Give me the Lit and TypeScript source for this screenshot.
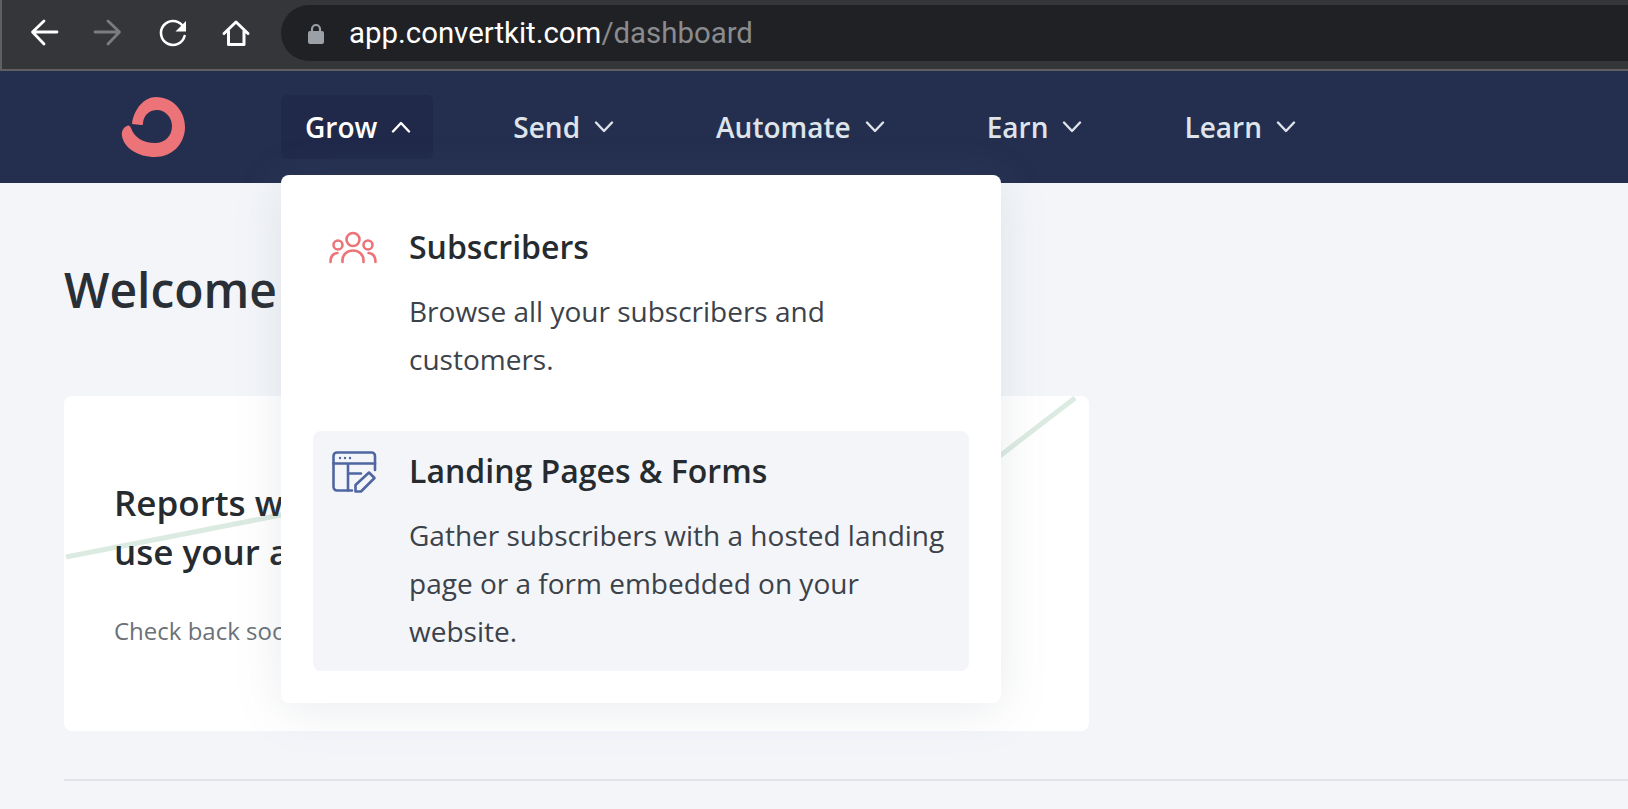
import { LitElement, html, css } from "lit";
import { customElement } from "lit/decorators.js";

const chevron = (up: boolean) => html`<svg class="chev" viewBox="0 0 20 12" width="20" height="12" fill="none" stroke="currentColor" stroke-width="2.4" stroke-linecap="round" stroke-linejoin="round"><path d=${up ? "M2 10.5 10 2l8 8.5" : "M2 1.5 10 10l8-8.5"}></path></svg>`;

const navItems = ["Send", "Automate", "Earn", "Learn"];

@customElement("app-root")
export class AppRoot extends LitElement {
  static styles = css`
    :host {
      display: block;
      height: 100vh;
      overflow: hidden;
      background: #f3f5f9;
      font-family: "Open Sans", "Liberation Sans", sans-serif;
    }
    .toolbar {
      height: 69px;
      box-sizing: border-box;
      background: #35363a;
      border-left: 2px solid #5f6063;
      padding: 5px 0 8px 0;
      display: flex;
      align-items: stretch;
    }
    .tools {
      display: flex;
      width: 279px;
      flex: none;
    }
    .tools svg { display: block; }
    .url {
      flex: 1;
      background: #202124;
      border-radius: 28px 0 0 28px;
      display: flex;
      align-items: center;
      padding-left: 27px;
      font-family: Roboto, "Liberation Sans", sans-serif;
      font-size: 29.4px;
      color: #fff;
    }
    .lock { margin-right: 25px; flex: none; }
    .url span { color: #8a8b8e; }
    .sep { height: 2px; background: #5f5f5f; }
    nav {
      height: 112px;
      background: #242f4f;
      display: flex;
      align-items: center;
      position: relative;
      z-index: 2;
      padding-left: 120px;
      box-sizing: border-box;
    }
    .logo { flex: none; margin-right: 95px; display: block; }
    .menu-items { display: flex; gap: 56px; }
    .item {
      position: relative;
      height: 64px;
      box-sizing: border-box;
      padding: 0 22px 0 24px;
      display: flex;
      align-items: center;
      gap: 14px;
      border-radius: 6px;
      color: #dfe3ea;
      font-size: 28px;
      font-weight: 600;
    }
    .item.open { background: #20294a; color: #fff; }
    .chev { display: block; flex: none; margin-top: -1px; }
    .dropdown {
      position: absolute;
      left: 0;
      top: 80px;
      width: 720px;
      height: 528px;
      box-sizing: border-box;
      padding: 32px;
      background: #fff;
      border-radius: 8px;
      box-shadow: 0 6px 48px rgba(110, 120, 140, 0.15);
      display: flex;
      flex-direction: column;
    }
    .entry {
      display: flex;
      padding: 18px 20px 0 16px;
      box-sizing: border-box;
      border-radius: 8px;
    }
    .entry.first { height: 224px; }
    .entry.active { background: #f3f5f9; height: 240px; }
    .entry .ic { width: 80px; flex: none; }
    .entry .ic svg { display: block; }
    .entry h3 {
      margin: 0;
      font-size: 32px;
      line-height: 44px;
      font-weight: 600;
      color: #262b30;
    }
    .entry p {
      margin: 18px 0 0;
      font-size: 28px;
      line-height: 48px;
      font-weight: 400;
      color: #3c4249;
    }
    .icon-subs { margin: 0 0 0 -1px; }
    .icon-page { margin-top: -1px; }
    main { padding: 0 0 0 64px; }
    h1 {
      margin: 0;
      padding-top: 76px;
      height: 213px;
      box-sizing: border-box;
      font-size: 48px;
      line-height: 62px;
      font-weight: 600;
      color: #2a2f35;
    }
    .card {
      position: relative;
      width: 1025px;
      height: 335px;
      box-sizing: border-box;
      background: #fff;
      border-radius: 8px;
      padding: 82px 50px 0;
      overflow: hidden;
    }
    .card svg { position: absolute; left: 0; top: 0; }
    .card h2 {
      position: relative;
      margin: 0;
      font-size: 35px;
      line-height: 49px;
      font-weight: 600;
      color: #262b30;
      width: 640px;
    }
    .card p {
      position: relative;
      margin: 39px 0 0;
      font-size: 24px;
      line-height: 32px;
      color: #6b7177;
    }
    hr {
      border: 0;
      height: 2px;
      background: #dfe2e7;
      margin: 48px 0 0;
    }
  `;

  render() {
    return html`
      <div class="toolbar">
        <div class="tools">
          <svg width="279" height="56" viewBox="2 5 279 56" fill="none" stroke-linecap="round" stroke-linejoin="round">
            <path d="M57 32H33M44 21 32.500 32 44 44" stroke="#fff" stroke-width="2.800"></path>
            <path d="M95 32h24M108 21l11.500 11L108 44" stroke="#7b7c7f" stroke-width="2.800"></path>
            <path d="M182 25a12 12 0 1 0 2.600 11" stroke="#fff" stroke-width="2.600"></path>
            <path d="M186 21v10.500h-10.500z" fill="#fff"></path>
            <path d="M224 33.500 236 22l12 11.500M228.500 31v13.500h15.500V31" stroke="#fff" stroke-width="3"></path>
          </svg>
        </div>
        <div class="url">
          <svg class="lock" width="16" height="21" viewBox="0 0 16 21"><path d="M4 9V6a4 4 0 0 1 8 0v3" fill="none" stroke="#9aa0a6" stroke-width="2.200"></path><rect x="0" y="8" width="16" height="13" rx="2" fill="#9aa0a6"></rect></svg>
          app.convertkit.com<span>/dashboard</span>
        </div>
      </div>
      <div class="sep"></div>
      <nav>
        <svg class="logo" width="66" height="62" viewBox="120 96 66 62" fill="#ec7377"><path d="M132 124C134 108 145 97 156 97C173 97 185 111 185 127C185 144 172 157 155 157C138 157 124 148 122 136C121 131 124 127 127 126C129 125 130 126 131 128C134 137 143 143 155 143C165 143 172 136 172 126C172 117 165 110 157 110C149 110 143 116 143 124C143 125 142 125 141 125Z"></path></svg>
        <div class="menu-items">
          <div class="item open">
            Grow ${chevron(true)}
            <div class="dropdown">
              <div class="entry first">
                <div class="ic">
                  <svg class="icon-subs" width="50" height="50" viewBox="328 225 50 50" fill="none" stroke="#ec7377" stroke-width="2.600" stroke-linecap="round">
                    <circle cx="353" cy="239.500" r="6.500"></circle>
                    <circle cx="338" cy="245" r="4.500"></circle>
                    <circle cx="368" cy="245" r="4.500"></circle>
                    <path d="M342.500 262v-2a10.500 9.500 0 0 1 21 0v2M330.500 262c0-5.500 2.500-8.500 7-9M375.500 262c0-5.500-2.500-8.500-7-9"></path>
                  </svg>
                </div>
                <div>
                  <h3>Subscribers</h3>
                  <p>Browse all your subscribers and customers.</p>
                </div>
              </div>
              <div class="entry active">
                <div class="ic">
                  <svg class="icon-page" width="50" height="50" viewBox="328 448 50 50" fill="none" stroke="#4f66a0" stroke-width="2.600" stroke-linecap="round" stroke-linejoin="round">
                    <path d="M351 490.500h-15a3.500 3.500 0 0 1-3.500-3.500v-31a3.500 3.500 0 0 1 3.500-3.500h34.500a3.500 3.500 0 0 1 3.500 3.500v14"></path>
                    <path d="M332.500 463.500h41.500M347 463.500v27M347 473.500h13"></path>
                    <path d="M354.500 485 368 472.500l5.500 5.500-13.500 13.500h-5.500z"></path>
                    <circle cx="339" cy="458" r="1.200" fill="#4f66a0" stroke="none"></circle>
                    <circle cx="344" cy="458" r="1.200" fill="#4f66a0" stroke="none"></circle>
                    <circle cx="349" cy="458" r="1.200" fill="#4f66a0" stroke="none"></circle>
                  </svg>
                </div>
                <div>
                  <h3>Landing Pages &amp; Forms</h3>
                  <p>Gather subscribers with a hosted landing page or a form embedded on your website.</p>
                </div>
              </div>
            </div>
          </div>
          ${navItems.map((n) => html`<div class="item">${n} ${chevron(false)}</div>`)}
        </div>
      </nav>
      <main>
        <h1>Welcome back to your dashboard</h1>
        <div class="card">
          <svg width="1025" height="335" fill="none"><path d="M2 161 217 119 937 59 1011 2" stroke="#dcebe2" stroke-width="5"></path></svg>
          <h2>Reports will appear here once you use your account</h2>
          <p>Check back soon to see how things are going</p>
        </div>
        <hr />
      </main>
    `;
  }
}
